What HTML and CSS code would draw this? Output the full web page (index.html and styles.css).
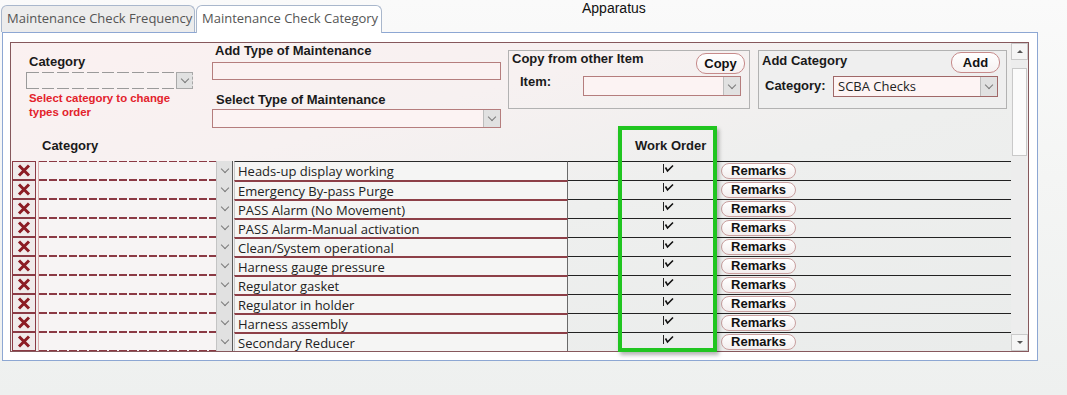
FILE: index.html
```html
<!DOCTYPE html>
<html lang="en">
<head>
    <meta charset="UTF-8">
    <meta name="viewport" content="width=device-width, initial-scale=1.0">
    <title>Maintenance Check Category</title>
    <link rel="stylesheet" href="styles.css">
</head>
<body>
    <!-- Tabs -->
    <div class="topbar">
        <div class="tab">Maintenance Check Frequency</div>
        <div class="tab active">Maintenance Check Category</div>
        <div class="page-title">Apparatus</div>
    </div>

    <div class="panel">
        <div class="frame">
            <div class="frame-body">

                <!-- Filters -->
                <div class="filters">
                    <div class="cat-filter">
                        <label class="lbl">Category</label>
                        <div class="dash-select"><span class="drop"></span></div>
                        <div class="hint">Select category to change<br>types order</div>
                    </div>

                    <div class="type-filter">
                        <label class="lbl">Add Type of Maintenance</label>
                        <div class="text-input"></div>
                        <label class="lbl second">Select Type of Maintenance</label>
                        <div class="pick-input"><span class="value"></span><span class="drop"></span></div>
                    </div>

                    <div class="side-box copy-box">
                        <div class="box-head">
                            <span class="lbl">Copy from other Item</span>
                            <button class="pill">Copy</button>
                        </div>
                        <div class="box-row">
                            <span class="lbl">Item:</span>
                            <div class="pick-input"><span class="value"></span><span class="drop"></span></div>
                        </div>
                    </div>

                    <div class="side-box add-box">
                        <div class="box-head">
                            <span class="lbl">Add Category</span>
                            <button class="pill">Add</button>
                        </div>
                        <div class="box-row">
                            <span class="lbl">Category:</span>
                            <div class="pick-input"><span class="value">SCBA Checks</span><span class="drop"></span></div>
                        </div>
                    </div>
                </div>

                <!-- List header -->
                <div class="list-head">
                    <span class="lbl lh-cat">Category</span>
                    <span class="lbl">Work Order</span>
                </div>

                <!-- Types list -->
                <div class="rows">
                    <div class="row">
                        <span class="del"><svg width="14" height="13" viewBox="0 0 14 13"><path d="M2 1.5L12 11.5M12 1.5L2 11.5" stroke="#8c1c24" stroke-width="3"/></svg></span>
                        <span class="pick"><span class="drop"></span></span>
                        <span class="name">Heads-up display working</span>
                        <span class="rest"><svg class="tick" width="11" height="9" viewBox="0 0 11 9"><path d="M0.5 0V9" stroke="#222" stroke-width="1"/><path d="M2.5 3.5L4.5 7L10 1.5" fill="none" stroke="#111" stroke-width="1.6"/></svg><button class="remarks">Remarks</button></span>
                    </div>
                    <div class="row">
                        <span class="del"><svg width="14" height="13" viewBox="0 0 14 13"><path d="M2 1.5L12 11.5M12 1.5L2 11.5" stroke="#8c1c24" stroke-width="3"/></svg></span>
                        <span class="pick"><span class="drop"></span></span>
                        <span class="name">Emergency By-pass Purge</span>
                        <span class="rest"><svg class="tick" width="11" height="9" viewBox="0 0 11 9"><path d="M0.5 0V9" stroke="#222" stroke-width="1"/><path d="M2.5 3.5L4.5 7L10 1.5" fill="none" stroke="#111" stroke-width="1.6"/></svg><button class="remarks">Remarks</button></span>
                    </div>
                    <div class="row">
                        <span class="del"><svg width="14" height="13" viewBox="0 0 14 13"><path d="M2 1.5L12 11.5M12 1.5L2 11.5" stroke="#8c1c24" stroke-width="3"/></svg></span>
                        <span class="pick"><span class="drop"></span></span>
                        <span class="name">PASS Alarm (No Movement)</span>
                        <span class="rest"><svg class="tick" width="11" height="9" viewBox="0 0 11 9"><path d="M0.5 0V9" stroke="#222" stroke-width="1"/><path d="M2.5 3.5L4.5 7L10 1.5" fill="none" stroke="#111" stroke-width="1.6"/></svg><button class="remarks">Remarks</button></span>
                    </div>
                    <div class="row">
                        <span class="del"><svg width="14" height="13" viewBox="0 0 14 13"><path d="M2 1.5L12 11.5M12 1.5L2 11.5" stroke="#8c1c24" stroke-width="3"/></svg></span>
                        <span class="pick"><span class="drop"></span></span>
                        <span class="name">PASS Alarm-Manual activation</span>
                        <span class="rest"><svg class="tick" width="11" height="9" viewBox="0 0 11 9"><path d="M0.5 0V9" stroke="#222" stroke-width="1"/><path d="M2.5 3.5L4.5 7L10 1.5" fill="none" stroke="#111" stroke-width="1.6"/></svg><button class="remarks">Remarks</button></span>
                    </div>
                    <div class="row">
                        <span class="del"><svg width="14" height="13" viewBox="0 0 14 13"><path d="M2 1.5L12 11.5M12 1.5L2 11.5" stroke="#8c1c24" stroke-width="3"/></svg></span>
                        <span class="pick"><span class="drop"></span></span>
                        <span class="name">Clean/System operational</span>
                        <span class="rest"><svg class="tick" width="11" height="9" viewBox="0 0 11 9"><path d="M0.5 0V9" stroke="#222" stroke-width="1"/><path d="M2.5 3.5L4.5 7L10 1.5" fill="none" stroke="#111" stroke-width="1.6"/></svg><button class="remarks">Remarks</button></span>
                    </div>
                    <div class="row">
                        <span class="del"><svg width="14" height="13" viewBox="0 0 14 13"><path d="M2 1.5L12 11.5M12 1.5L2 11.5" stroke="#8c1c24" stroke-width="3"/></svg></span>
                        <span class="pick"><span class="drop"></span></span>
                        <span class="name">Harness gauge pressure</span>
                        <span class="rest"><svg class="tick" width="11" height="9" viewBox="0 0 11 9"><path d="M0.5 0V9" stroke="#222" stroke-width="1"/><path d="M2.5 3.5L4.5 7L10 1.5" fill="none" stroke="#111" stroke-width="1.6"/></svg><button class="remarks">Remarks</button></span>
                    </div>
                    <div class="row">
                        <span class="del"><svg width="14" height="13" viewBox="0 0 14 13"><path d="M2 1.5L12 11.5M12 1.5L2 11.5" stroke="#8c1c24" stroke-width="3"/></svg></span>
                        <span class="pick"><span class="drop"></span></span>
                        <span class="name">Regulator gasket</span>
                        <span class="rest"><svg class="tick" width="11" height="9" viewBox="0 0 11 9"><path d="M0.5 0V9" stroke="#222" stroke-width="1"/><path d="M2.5 3.5L4.5 7L10 1.5" fill="none" stroke="#111" stroke-width="1.6"/></svg><button class="remarks">Remarks</button></span>
                    </div>
                    <div class="row">
                        <span class="del"><svg width="14" height="13" viewBox="0 0 14 13"><path d="M2 1.5L12 11.5M12 1.5L2 11.5" stroke="#8c1c24" stroke-width="3"/></svg></span>
                        <span class="pick"><span class="drop"></span></span>
                        <span class="name">Regulator in holder</span>
                        <span class="rest"><svg class="tick" width="11" height="9" viewBox="0 0 11 9"><path d="M0.5 0V9" stroke="#222" stroke-width="1"/><path d="M2.5 3.5L4.5 7L10 1.5" fill="none" stroke="#111" stroke-width="1.6"/></svg><button class="remarks">Remarks</button></span>
                    </div>
                    <div class="row">
                        <span class="del"><svg width="14" height="13" viewBox="0 0 14 13"><path d="M2 1.5L12 11.5M12 1.5L2 11.5" stroke="#8c1c24" stroke-width="3"/></svg></span>
                        <span class="pick"><span class="drop"></span></span>
                        <span class="name">Harness assembly</span>
                        <span class="rest"><svg class="tick" width="11" height="9" viewBox="0 0 11 9"><path d="M0.5 0V9" stroke="#222" stroke-width="1"/><path d="M2.5 3.5L4.5 7L10 1.5" fill="none" stroke="#111" stroke-width="1.6"/></svg><button class="remarks">Remarks</button></span>
                    </div>
                    <div class="row">
                        <span class="del"><svg width="14" height="13" viewBox="0 0 14 13"><path d="M2 1.5L12 11.5M12 1.5L2 11.5" stroke="#8c1c24" stroke-width="3"/></svg></span>
                        <span class="pick"><span class="drop"></span></span>
                        <span class="name">Secondary Reducer</span>
                        <span class="rest"><svg class="tick" width="11" height="9" viewBox="0 0 11 9"><path d="M0.5 0V9" stroke="#222" stroke-width="1"/><path d="M2.5 3.5L4.5 7L10 1.5" fill="none" stroke="#111" stroke-width="1.6"/></svg><button class="remarks">Remarks</button></span>
                    </div>
                </div>

                <!-- Highlight round the Work Order column -->
                <div class="wo-mark"></div>
            </div>

            <!-- Scrollbar -->
            <div class="vscroll">
                <span class="sb-btn up"></span>
                <span class="sb-thumb"></span>
                <span class="sb-track"></span>
                <span class="sb-btn down"></span>
            </div>
        </div>
    </div>
</body>
</html>
```

FILE: styles.css
```css
* {
    box-sizing: border-box;
}

body {
    margin: 0;
    height: 395px;
    overflow: hidden;
    font-family: "Liberation Sans", Arial, sans-serif;
    font-size: 13px;
    color: #1a1a1a;
    background: linear-gradient(to bottom, #fafafa 0, #f4f5f4 45%, #eef0ef 100%);
}

/* Tabs */
.topbar {
    display: flex;
    align-items: flex-end;
    height: 32px;
    padding-left: 1px;
}

.tab {
    width: 194px;
    height: 27px;
    padding-left: 5px;
    border: 1px solid #a9b7cc;
    border-bottom: none;
    border-radius: 6px 6px 0 0;
    background: #ececec;
    font-family: "Open Sans", sans-serif;
    font-size: 13px;
    line-height: 25px;
    color: #555;
    white-space: nowrap;
}

.tab.active {
    width: 186px;
    height: 28px;
    margin-left: 1px;
    margin-bottom: -1px;
    background: #fff;
    position: relative;
    z-index: 1;
}

.page-title {
    align-self: flex-start;
    margin-left: 200px;
    font-size: 14px;
    line-height: 16px;
    color: #111;
}

/* Panels */
.panel {
    width: 1036px;
    margin-left: 2px;
    padding: 9px 8px 8px 7px;
    border: 1px solid #8da7d3;
    background: #fff;
}

.frame {
    display: flex;
    height: 310px;
    border: 1px solid #86585c;
}

.frame-body {
    position: relative;
    width: 1000px;
    background: linear-gradient(165deg, #fbf1f1 0, #f7f1f1 30%, #eeefee 55%, #eaeceb 100%);
}

.lbl {
    display: block;
    font-weight: bold;
    font-size: 13px;
    line-height: 15px;
    color: #1a1a1a;
    white-space: nowrap;
}

/* Filters */
.filters {
    display: flex;
    align-items: flex-start;
    height: 87px;
}

.cat-filter {
    width: 167px;
    margin-left: 15px;
    padding-top: 11px;
}

.cat-filter .lbl {
    padding-left: 3px;
}

.dash-select {
    display: flex;
    justify-content: flex-end;
    height: 17px;
    margin-top: 3px;
    border-left: 1px solid #9a9a9a;
    background:
        repeating-linear-gradient(to right, #9a9a9a 0 12px, transparent 12px 15px) top left / 100% 1px no-repeat,
        repeating-linear-gradient(to right, #9a9a9a 0 12px, transparent 12px 15px) bottom left / 100% 1px no-repeat,
        #f8f2f2;
}

.dash-select .drop {
    border: 1px solid #a8a8a8;
    border-right-style: dashed;
}

.hint {
    margin-top: 2px;
    padding-left: 3px;
    font-size: 11.4px;
    font-weight: bold;
    line-height: 14px;
    color: #e3222b;
}

.type-filter {
    width: 289px;
    margin-left: 19px;
}

.type-filter .lbl {
    padding-left: 3px;
}

.type-filter .lbl.second {
    margin-top: 12px;
    padding-left: 4px;
}

.text-input {
    height: 18px;
    margin-top: 4px;
    border: 1px solid #b57d7d;
    background: #fbf1f1;
}

.pick-input {
    display: flex;
    height: 19px;
    margin-top: 2px;
    border: 1px solid #b57d7d;
    background: #fcf3f3;
}

.pick-input .value {
    flex: 1;
    padding-left: 4px;
    font-family: "Open Sans", sans-serif;
    font-size: 13px;
    line-height: 18px;
    color: #222;
}

.drop {
    display: flex;
    align-items: center;
    justify-content: center;
    width: 17px;
    border-left: 1px solid #bdbdbd;
    background: #e1e1e1;
}

.drop::after {
    content: "";
    width: 5px;
    height: 5px;
    margin-top: -3px;
    border-right: 1px solid #7a7a7a;
    border-bottom: 1px solid #7a7a7a;
    transform: rotate(45deg);
}

.side-box {
    height: 59px;
    margin-top: 7px;
    border: 1px solid #b2b2b2;
}

.copy-box {
    width: 242px;
    margin-left: 7px;
}

.add-box {
    width: 249px;
    margin-left: 8px;
    background: #efefef;
}

.box-head {
    display: flex;
    justify-content: space-between;
    align-items: flex-start;
}

.box-head .lbl {
    padding-left: 3px;
}

.add-box .box-head .lbl {
    margin-top: 2px;
}

.pill {
    width: 49px;
    height: 21px;
    padding: 0;
    border: 1px solid #c68a8a;
    border-radius: 10px;
    background: linear-gradient(#fff, #f6f1f1);
    font-family: "Liberation Sans", Arial, sans-serif;
    font-size: 13px;
    font-weight: bold;
    color: #111;
}

.copy-box .pill {
    margin: 2px 4px 0 0;
}

.add-box .pill {
    margin: 1px 6px 0 0;
}

.box-row {
    display: flex;
    align-items: flex-start;
}

.copy-box .box-row {
    padding-left: 11px;
}

.copy-box .box-row .lbl {
    width: 63px;
}

.copy-box .pick-input {
    width: 158px;
    height: 20px;
}

.add-box .box-row {
    padding-left: 6px;
}

.add-box .box-row .lbl {
    width: 68px;
    margin-top: 5px;
}

.add-box .pick-input {
    width: 165px;
    height: 21px;
    margin-top: 3px;
    border-color: #a06868;
    background: #fdf4f4;
}

/* List */
.list-head {
    display: flex;
    height: 31px;
    padding-top: 8px;
}

.lh-cat {
    width: 624px;
    padding-left: 31px;
}

.row {
    display: flex;
    height: 19px;
}

.del {
    display: flex;
    align-items: center;
    justify-content: center;
    width: 24px;
    margin-left: 1px;
    border: 1px solid #8b3a44;
    background: #f0eaea;
}

.pick {
    display: flex;
    justify-content: flex-end;
    width: 195px;
    margin-left: 2px;
    border-left: 1px solid #d9aaaa;
    background:
        repeating-linear-gradient(to right, #8b3a44 0 8px, transparent 8px 10px) top left / 100% 1px no-repeat,
        repeating-linear-gradient(to right, #8b3a44 0 8px, transparent 8px 10px) bottom left / 100% 1px no-repeat,
        #f7f4f4;
}

.pick .drop {
    border-left: 1px solid #c4c4c4;
    border-right: 1px solid #5a5a5a;
}

.name {
    display: flex;
    align-items: center;
    width: 334px;
    margin-left: 1px;
    padding-left: 3px;
    border-top: 2px solid #8d3f47;
    border-left: 1px solid #c9c9c9;
    border-right: 1px solid #6a6a6a;
    background: #f5f5f4;
    font-family: "Open Sans", sans-serif;
    font-size: 13px;
    color: #222;
    white-space: nowrap;
}

.row:first-child .name {
    border-top: 1px solid #2a2a2a;
}

.rest {
    display: flex;
    align-items: flex-start;
    flex: 1;
    border-top: 1px solid #222;
}

.tick {
    margin: 2px 0 0 95px;
}

.remarks {
    width: 75px;
    height: 16px;
    margin: 1px 0 0 47px;
    padding: 0;
    border: 1px solid #c9a0a0;
    border-radius: 8px;
    background: linear-gradient(#fff, #f3eeee);
    font-family: "Liberation Sans", Arial, sans-serif;
    font-size: 13px;
    font-weight: bold;
    line-height: 14px;
    color: #111;
}

.wo-mark {
    position: absolute;
    left: 607px;
    top: 83px;
    width: 99px;
    height: 226px;
    border: 4px solid #20c520;
    box-shadow: 2px 3px 4px rgba(0, 0, 0, 0.3);
    pointer-events: none;
}

/* Scrollbar */
.vscroll {
    display: flex;
    flex-direction: column;
    width: 17px;
    background: #ededed;
}

.sb-btn {
    display: flex;
    align-items: center;
    justify-content: center;
    height: 17px;
    border: 1px solid #cacaca;
    background: #f5f5f5;
}

.sb-btn::after {
    content: "";
    border-left: 3px solid transparent;
    border-right: 3px solid transparent;
}

.sb-btn.up::after {
    border-bottom: 3px solid #555;
}

.sb-btn.down::after {
    border-top: 3px solid #555;
}

.sb-thumb {
    height: 88px;
    margin: 8px 1px 0;
    border: 1px solid #c9c9c9;
    background: #fbfbfb;
}

.sb-track {
    flex: 1;
}
```
